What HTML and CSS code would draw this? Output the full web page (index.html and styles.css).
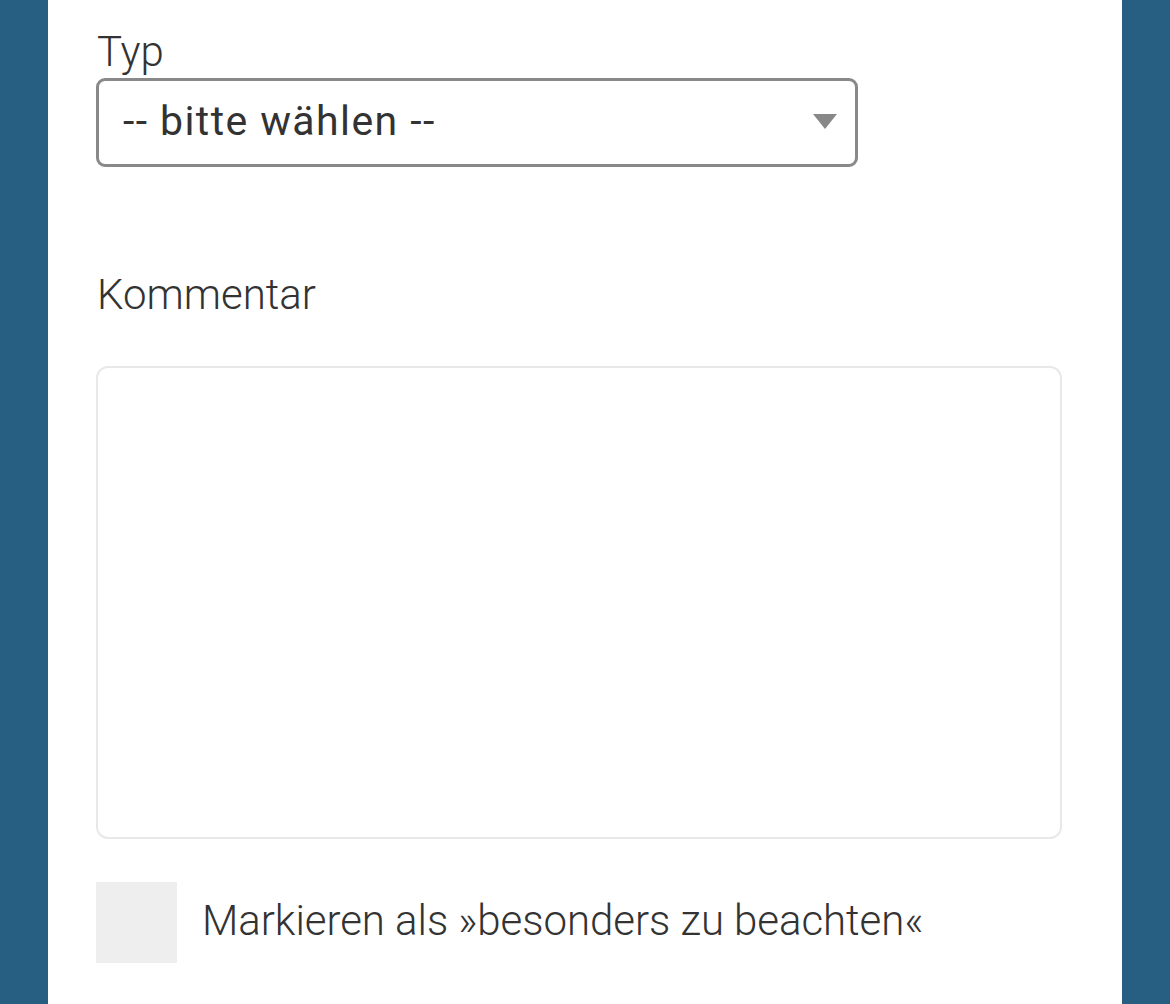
FILE: index.html
```html
<!DOCTYPE html>
<html lang="de">
<head>
<meta charset="utf-8">
<link rel="stylesheet" href="styles.css">
</head>
<body>
<div class="page">
  <form class="panel">
    <label class="label label-typ" for="typ">Typ</label>
    <div class="select">
      <span class="select-text">-- bitte wählen --</span>
      <svg class="select-arrow" width="24" height="15" viewBox="0 0 24 15"><path d="M0 0 H24 L12 15 Z" fill="#888"/></svg>
    </div>
    <label class="label label-comment" for="kommentar">Kommentar</label>
    <div class="textarea" id="kommentar"></div>
    <div class="check-row">
      <span class="checkbox"></span>
      <span class="check-label">Markieren als »besonders zu beachten«</span>
    </div>
  </form>
</div>
</body>
</html>
```
FILE: styles.css
```css
html, body {
  margin: 0;
  padding: 0;
  height: 100%;
}
body {
  background: #275f82;
  font-family: Roboto, "Noto Sans", sans-serif;
  color: #333;
  overflow: hidden;
}
.page {
  padding: 0 48px;
  height: 100%;
}
.panel {
  background: #fff;
  height: 100%;
  box-sizing: border-box;
  padding: 0 60px 0 48px;
  display: flex;
  flex-direction: column;
}
.label {
  display: block;
  font-weight: 300;
  font-size: 42px;
  line-height: 1;
  color: #333;
}
.label-typ {
  margin-top: 31px;
  margin-left: 1px;
}
.select {
  margin-top: 5px;
  width: 762px;
  height: 89px;
  box-sizing: border-box;
  border: 3px solid #898989;
  border-radius: 9px;
  display: flex;
  align-items: center;
  padding: 0 18px 0 24px;
}
.select-text {
  flex: 1;
  font-size: 41px;
  font-weight: 400;
  letter-spacing: 1.4px;
  color: #333;
  margin-top: -4px;
}
.select-arrow {
  display: block;
  margin-top: -2px;
}
.label-comment {
  margin-top: 107px;
  margin-left: 1px;
}
.textarea {
  margin-top: 50px;
  width: 966px;
  height: 473px;
  box-sizing: border-box;
  border: 2px solid #e8e8e8;
  border-radius: 12px;
}
.check-row {
  margin-top: 43px;
  display: flex;
  align-items: center;
  gap: 25px;
}
.checkbox {
  width: 81px;
  height: 81px;
  background: #eeeeee;
  flex: none;
}
.check-label {
  font-size: 42px;
  font-weight: 300;
  letter-spacing: -0.05px;
  color: #333;
  margin-top: -4px;
}
```
